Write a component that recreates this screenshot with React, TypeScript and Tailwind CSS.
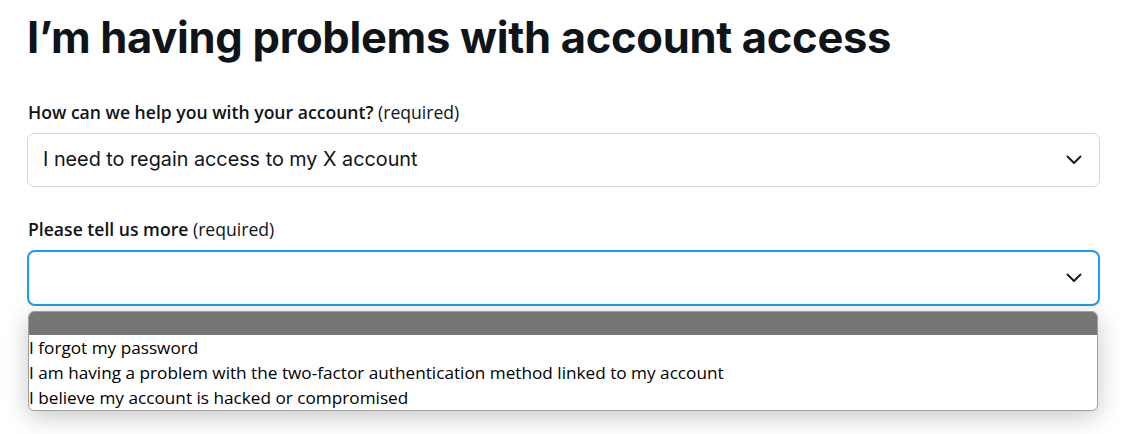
import React from "react";

const Chevron = () => (
    <svg width="16" height="10" viewBox="0 0 16 10" fill="none" className="shrink-0">
        <path d="M1.5 1.5L8 8L14.5 1.5" stroke="#0f1419" strokeWidth="1.8" strokeLinecap="round" strokeLinejoin="round" />
    </svg>
);

const options = [
    "I forgot my password",
    "I am having a problem with the two-factor authentication method linked to my account",
    "I believe my account is hacked or compromised",
];

export default function App() {
    return (
        <div className="w-[1143px] h-[434px] bg-white overflow-hidden text-[#0f1419]">
            <div className="pl-[27px] w-[1100px]">
                <h1 className="pt-[13px] text-[43.5px] leading-[48px] font-bold tracking-[-0.3px] [font-family:Inter,'Liberation_Sans',sans-serif]">
                    I’m having problems with account access
                </h1>

                <label className="block mt-[40px] pl-[1px] text-[17.6px] leading-[22px] [font-family:'Open_Sans','Noto_Sans',sans-serif]">
                    <span className="font-semibold">How can we help you with your account?</span> (required)
                </label>
                <div className="mt-[10px] h-[54px] rounded-[7px] border border-[#cfd9de] flex items-center justify-between pl-[15px] pr-[17px]">
                    <span className="text-[19.8px] [font-family:Inter,'Liberation_Sans',sans-serif]">
                        I need to regain access to my X account
                    </span>
                    <Chevron />
                </div>

                <label className="block mt-[31px] pl-[1px] text-[17.6px] leading-[22px] [font-family:'Open_Sans','Noto_Sans',sans-serif]">
                    <span className="font-semibold">Please tell us more</span> (required)
                </label>
                <div className="mt-[10px] h-[56px] rounded-[8px] border-2 border-[#1d9bf0] flex items-center justify-end pr-[16px]">
                    <Chevron />
                </div>

                <div className="relative">
                    <div className="absolute left-[1px] right-[2px] top-[5px] rounded-[6px] border border-[#a0a0a0] bg-white overflow-hidden shadow-[0_6px_24px_rgba(0,0,0,0.22)]">
                        <div className="h-[23px] bg-[#767676]" />
                        <ul className="text-[17.2px] leading-[25px] [font-family:'Open_Sans','Noto_Sans',sans-serif] text-black">
                            {options.map((o) => (
                                <li key={o} className="whitespace-nowrap">{o}</li>
                            ))}
                        </ul>
                    </div>
                </div>
            </div>
        </div>
    );
}
